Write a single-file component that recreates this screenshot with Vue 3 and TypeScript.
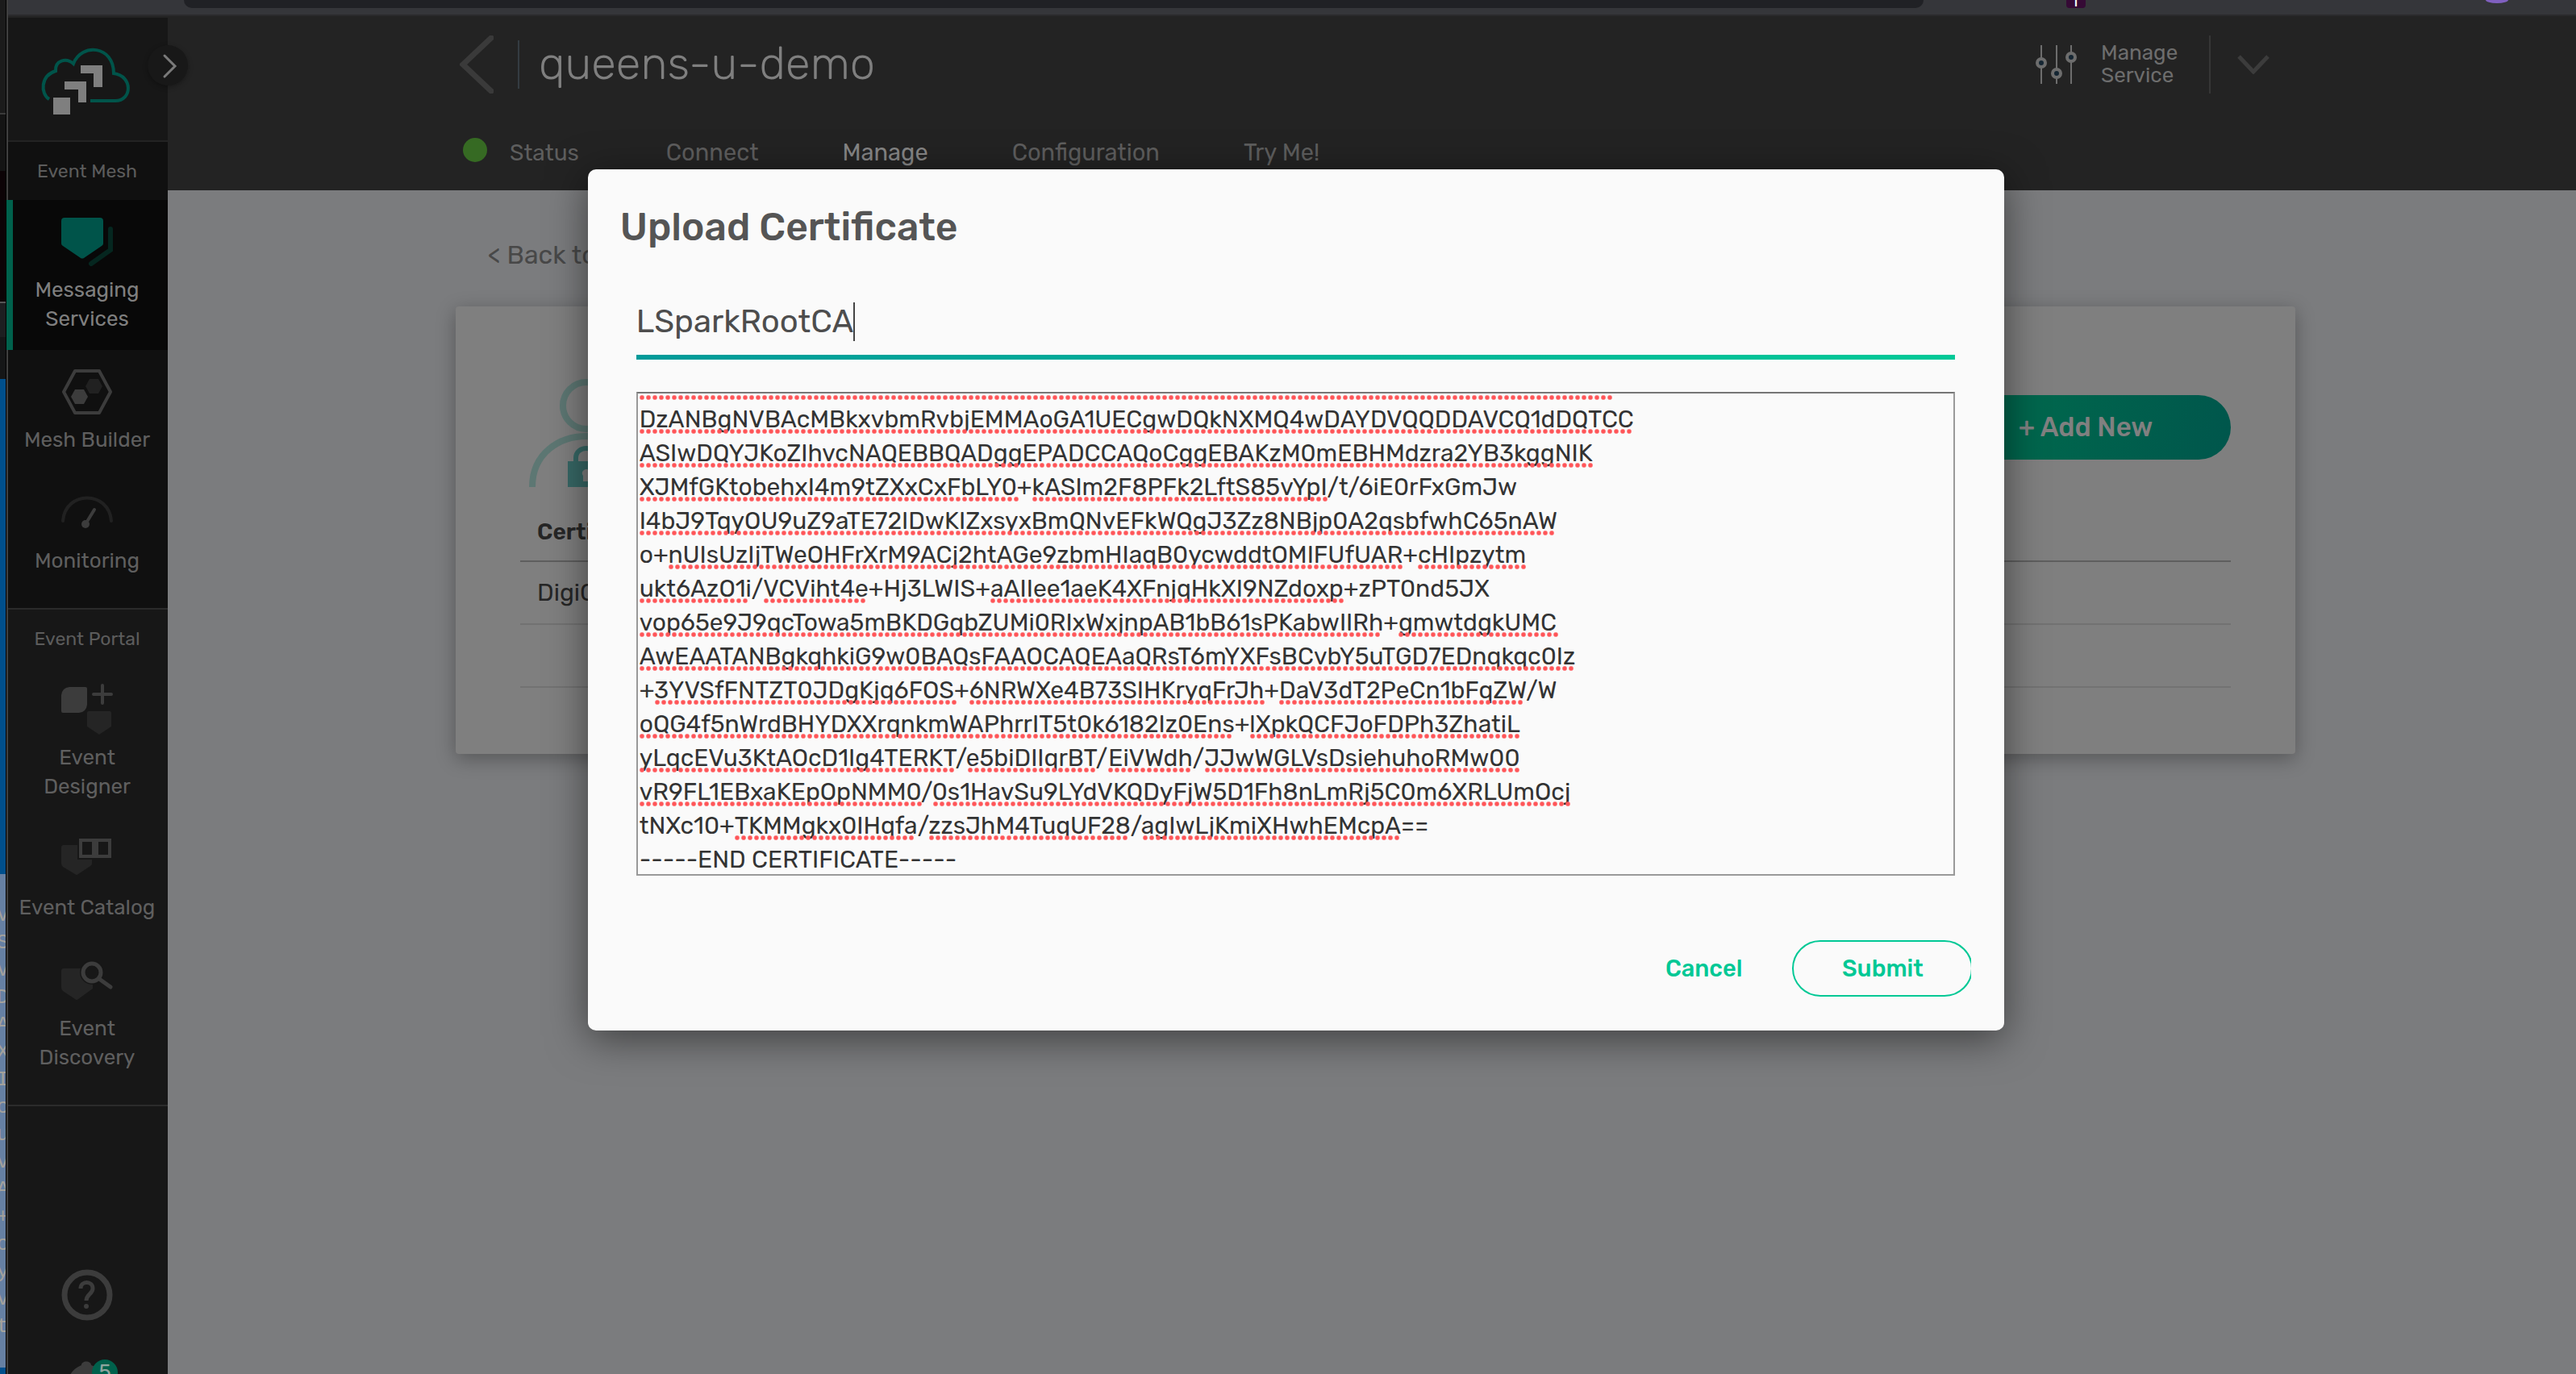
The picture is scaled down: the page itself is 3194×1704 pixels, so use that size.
<script setup lang="ts">
import { onMounted, ref } from 'vue'

interface Mark {
  gap: number
  width: number
}

const name = ref('LSparkRootCA')

const tabs = ['Connect', 'Manage', 'Configuration', 'Try Me!']
const activeTab = 'Manage'

const lines = [
  'DzANBgNVBAcMBkxvbmRvbjEMMAoGA1UECgwDQkNXMQ4wDAYDVQQDDAVCQ1dDQTCC',
  'ASIwDQYJKoZIhvcNAQEBBQADggEPADCCAQoCggEBAKzM0mEBHMdzra2YB3kggNIK',
  'XJMfGKtobehxI4m9tZXxCxFbLY0+kASIm2F8PFk2LftS85vYpI/t/6iE0rFxGmJw',
  'I4bJ9TqyOU9uZ9aTE72IDwKIZxsyxBmQNvEFkWQgJ3Zz8NBjp0A2qsbfwhC65nAW',
  'o+nUIsUzIjTWeOHFrXrM9ACj2htAGe9zbmHIaqB0ycwddtOMIFUfUAR+cHIpzytm',
  'ukt6AzO1i/VCViht4e+Hj3LWIS+aAIIee1aeK4XFnjqHkXI9NZdoxp+zPT0nd5JX',
  'vop65e9J9qcTowa5mBKDGqbZUMi0RIxWxjnpAB1bB61sPKabwIIRh+gmwtdgkUMC',
  'AwEAATANBgkqhkiG9w0BAQsFAAOCAQEAaQRsT6mYXFsBCvbY5uTGD7EDnqkqc0Iz',
  '+3YVSfFNTZT0JDgKjq6FOS+6NRWXe4B73SIHKryqFrJh+DaV3dT2PeCn1bFqZW/W',
  'oQG4f5nWrdBHYDXXrqnkmWAPhrrIT5t0k6182Iz0Ens+lXpkQCFJoFDPh3ZhatiL',
  'yLqcEVu3KtAOcD1Ig4TERKT/e5biDIIqrBT/EiVWdh/JJwWGLVsDsiehuhoRMw00',
  'vR9FL1EBxaKEpOpNMM0/0s1HavSu9LYdVKQDyFjW5D1Fh8nLmRj5C0m6XRLUmOcj',
  'tNXc10+TKMMgkx0IHqfa/zzsJhM4TuqUF28/agIwLjKmiXHwhEMcpA==',
  '-----END CERTIFICATE-----',
]
const certificate = ref(lines.join('\n'))

// Words the spelling checker leaves alone.
const accepted = new Set(['o', 't', 'W', '6iE0rFxGmJw', 'Hj3LWIS', 'zPT0nd5JX', 'tNXc10', 'END', 'CERTIFICATE'])

const area = ref<HTMLTextAreaElement | null>(null)
const marks = ref<Mark[][]>([])

onMounted(() => {
  const ctx = document.createElement('canvas').getContext('2d')
  if (!ctx || !area.value) return
  const style = getComputedStyle(area.value)
  ctx.font = `${style.fontWeight} ${style.fontSize} ${style.fontFamily}`
  marks.value = lines.map((line) => {
    const row: Mark[] = []
    let end = 0
    for (const match of line.matchAll(/[A-Za-z0-9]+/g)) {
      if (accepted.has(match[0])) continue
      const start = ctx.measureText(line.slice(0, match.index)).width
      const size = ctx.measureText(match[0]).width
      const width = Math.round(size / 8) * 8
      row.push({ gap: Math.round(start - end), width })
      end = Math.round(start) + width
    }
    return row
  })
})

const backdropLetters = 'VSVDAXIcuvA+cyvt'.split('')
</script>

<template>
  <div class="screen">
    <div class="backdrop" aria-hidden="true">
      <div class="backdrop-dark"></div>
      <div class="backdrop-blue"></div>
      <div class="backdrop-text">
        <span v-for="(c, i) in backdropLetters" :key="i">{{ c }}</span>
      </div>
      <div class="backdrop-end"></div>
    </div>

    <div class="window">
      <div class="chrome">
        <div class="address"></div>
        <div class="extension">I</div>
        <div class="avatar"></div>
      </div>

      <div class="app">
        <nav class="sidebar">
          <div class="logo">
            <svg width="114" height="90" viewBox="50 56 114 90" fill="none">
              <path d="M61 123C50 116 50 94 69 88C68 75 82 71 91 79C101 53 141 56 141 91C165 94 164 125 143 125H112" stroke="#00544a" stroke-width="4" />
              <path d="M66 121h21v21H66zM80 101h27v26H97v-16H80zM100 81h27v27h-11V91h-16z" fill="#7f7f7f" />
            </svg>
            <button class="expand" aria-label="Expand menu">
              <svg width="50" height="50" viewBox="0 0 50 50" fill="none">
                <path d="M21 13L34 26L21 39" stroke="#7a7a7a" stroke-width="3" stroke-linecap="round" />
              </svg>
            </button>
          </div>

          <div class="group mesh">
            <p class="group-title">Event Mesh</p>
            <a href="#" class="item active">
              <svg width="64" height="64" viewBox="0 0 64 64" fill="none">
                <path d="M4 2H48Q52 2 52 6V34Q52 36 50 37L28 52Q26 53 24 52L2 37Q0 36 0 34V6Q0 2 4 2Z" fill="#00544a" />
                <path d="M61 16V42L37 59" stroke="#05261f" stroke-width="6" stroke-linecap="round" />
              </svg>
              <span>Messaging Services</span>
            </a>
            <a href="#" class="item">
              <svg width="64" height="64" viewBox="0 0 64 64" fill="none">
                <path d="M17 6H47L61 32L47 58H17L3 32Z" stroke="#3c3c3c" stroke-width="4" stroke-linejoin="round" />
                <path d="M17 29H28L33 38L28 47H17L12 38Z" fill="#3c3c3c" />
                <path d="M35 16H46L51 25L46 34H35L30 25Z" fill="#212121" />
              </svg>
              <span>Mesh Builder</span>
            </a>
            <a href="#" class="item">
              <svg width="64" height="64" viewBox="0 0 64 64" fill="none">
                <path d="M2 42C5 4 59 4 62 42" stroke="#212121" stroke-width="4" stroke-linecap="round" />
                <path d="M30 46L41 28" stroke="#3c3c3c" stroke-width="4" stroke-linecap="round" />
                <circle cx="30" cy="46" r="5" fill="#3c3c3c" />
              </svg>
              <span>Monitoring</span>
            </a>
          </div>

          <div class="group portal">
            <p class="group-title">Event Portal</p>
            <a href="#" class="item">
              <svg width="64" height="64" viewBox="0 0 64 64" fill="none">
                <path d="M10 4H30Q32 4 32 6V26Q31 35 22 36H2Q0 36 0 34V14Q1 5 10 4Z" fill="#3c3c3c" />
                <path d="M51 2V24M40 13H62" stroke="#3c3c3c" stroke-width="4" stroke-linecap="round" />
                <path d="M34 34H60Q62 34 62 36V53L47 63L32 53V36Q32 34 34 34Z" fill="#252525" />
              </svg>
              <span>Event Designer</span>
            </a>
            <a href="#" class="item">
              <svg width="64" height="64" viewBox="0 0 64 64" fill="none">
                <path d="M3 14H20V32H38V37Q38 39 36 40L21 50Q19 52 17 50L2 41Q0 39 0 37V17Q0 14 3 14Z" fill="#252525" />
                <path d="M24 8H40V28H24ZM44 8H60V28H44ZM42 9V30" stroke="#3c3c3c" stroke-width="4" />
              </svg>
              <span>Event Catalog</span>
            </a>
            <a href="#" class="item">
              <svg width="64" height="64" viewBox="0 0 64 64" fill="none">
                <path d="M3 17H36L39 37V42L21 55Q19 57 17 55L2 45Q0 43 0 41V20Q0 17 3 17Z" fill="#252525" />
                <circle cx="38" cy="22" r="15" fill="#171717" />
                <circle cx="38" cy="22" r="11" stroke="#3c3c3c" stroke-width="5" />
                <path d="M47 30L61 40" stroke="#3c3c3c" stroke-width="5" stroke-linecap="round" />
              </svg>
              <span>Event Discovery</span>
            </a>
          </div>

          <div class="foot">
            <button class="plain" aria-label="Help">
              <svg width="64" height="64" viewBox="0 0 64 64" fill="none">
                <circle cx="32" cy="32" r="28" stroke="#3c3c3c" stroke-width="7" />
                <path d="M24 24C24 14 39 14 39 24C39 31 31 31 31 39" stroke="#3c3c3c" stroke-width="5" />
                <circle cx="31" cy="46" r="3" fill="#3c3c3c" />
              </svg>
            </button>
            <button class="plain bell" aria-label="Notifications">
              <svg width="64" height="64" viewBox="0 0 64 64">
                <path d="M25 9C25 3 37 3 37 9C50 13 52 23 52 34V50H8V34C8 23 13 14 25 9Z" fill="#3c3c3c" />
              </svg>
              <span class="badge">5</span>
            </button>
          </div>
        </nav>

        <main class="main">
          <header class="header">
            <div class="title-row">
              <button class="plain" aria-label="Back">
                <svg width="42" height="72" viewBox="0 0 42 72" fill="none">
                  <path d="M39 3L4 36L39 69" stroke="#3a3a3a" stroke-width="7" stroke-linecap="round" />
                </svg>
              </button>
              <span class="title-rule"></span>
              <h1>queens-u-demo</h1>
              <button class="plain manage-service">
                <svg width="54" height="48" viewBox="0 0 54 48" fill="none" stroke="#6d6d6d">
                  <path d="M8 0V48M27 0V48M45 0V48" stroke-width="2" />
                  <g fill="#152633" stroke-width="4">
                    <circle cx="8" cy="22" r="5" />
                    <circle cx="27" cy="35" r="5" />
                    <circle cx="45" cy="15" r="5" />
                  </g>
                </svg>
                <span>Manage Service</span>
              </button>
              <span class="menu-rule"></span>
              <button class="plain" aria-label="More actions">
                <svg width="40" height="24" viewBox="0 0 40 24" fill="none">
                  <path d="M2 2L20 21L38 2" stroke="#3c3c3c" stroke-width="5" />
                </svg>
              </button>
            </div>
            <div class="tabs">
              <a href="#" class="status"><i></i>Status</a>
              <a v-for="tab in tabs" :key="tab" href="#" class="tab" :class="{ current: tab === activeTab }">{{ tab }}</a>
            </div>
          </header>

          <section class="content">
            <a href="#" class="back">&lt; Back to</a>
            <div class="card">
              <div class="card-top">
                <svg width="144" height="134" viewBox="0 0 144 134" fill="none">
                  <g stroke="#5d7773" stroke-width="8">
                    <circle cx="71" cy="33" r="29" />
                    <path d="M4 134C4 50 138 50 138 134" />
                  </g>
                  <path d="M58 102V98C58 82 84 82 84 98V102" stroke="#376866" stroke-width="6" />
                  <path d="M48 102H94V134H48Z" fill="#376866" />
                  <path d="M67 127V120A5 5 0 1 1 75 120V127Z" fill="#7f7f7f" />
                </svg>
                <button class="add">+ Add New</button>
              </div>
              <table>
                <thead>
                  <tr><th>Certificate</th></tr>
                </thead>
                <tbody>
                  <tr><td>DigiCert</td></tr>
                  <tr><td></td></tr>
                </tbody>
              </table>
            </div>
          </section>
        </main>
      </div>
    </div>

    <div class="overlay">
      <form class="modal" role="dialog" aria-labelledby="modal-title" @submit.prevent>
        <h2 id="modal-title">Upload Certificate</h2>
        <div class="fields">
          <div class="name-field">
            <input v-model="name" type="text" aria-label="Certificate name" spellcheck="false" />
            <span class="caret"></span>
          </div>
          <div class="cert-field">
            <textarea ref="area" v-model="certificate" aria-label="Certificate content" spellcheck="false"></textarea>
            <div class="marks" aria-hidden="true">
              <div class="mark-row first"><i class="mark long"></i></div>
              <div v-for="(row, r) in marks" :key="r" class="mark-row">
                <i v-for="(m, k) in row" :key="k" class="mark" :style="{ marginLeft: m.gap + 'px', width: m.width + 'px' }"></i>
              </div>
            </div>
          </div>
        </div>
        <div class="actions">
          <button type="button" class="cancel">Cancel</button>
          <button type="submit" class="submit">Submit</button>
        </div>
      </form>
    </div>
  </div>
</template>

<style>
body {
  margin: 0;
  background: #7b7c7e;
}
</style>

<style scoped>
* {
  box-sizing: border-box;
}
.screen {
  position: relative;
  display: flex;
  height: 100vh;
  overflow: hidden;
  font-family: Rubik, Roboto, "Liberation Sans", sans-serif;
  font-size: 26px;
  color: #666;
}
a {
  color: inherit;
  text-decoration: none;
}
button {
  font-family: inherit;
  cursor: pointer;
}
svg {
  display: block;
  flex: none;
}
h1,
h2,
p {
  margin: 0;
}
.plain {
  padding: 0;
  border: 0;
  background: none;
  color: inherit;
}

/* Desktop strip left of the browser window */
.backdrop {
  display: flex;
  flex-direction: column;
  flex: none;
  width: 8px;
  overflow: hidden;
  border-right: 1px solid #000;
}
.backdrop-dark {
  height: 470px;
  background: linear-gradient(#1b1b1b 140px, #3a3a3a 140px, #3a3a3a 142px, #141414 142px, #141414 212px, #0c0306 212px, #0c0306 374px, #555 374px, #555 376px, #1d1f21 376px, #1d1f21 418px, #151617 418px);
}
.backdrop-blue {
  height: 614px;
  background: #004f8c;
}
.backdrop-text {
  display: flex;
  flex-direction: column;
  align-items: center;
  height: 612px;
  padding-top: 34px;
  background: #6680a3;
  color: #a3a19c;
  font-family: "Liberation Mono", monospace;
  line-height: 34px;
}
.backdrop-end {
  flex: 1;
  background: #004f8c;
}

.window {
  display: flex;
  flex-direction: column;
  flex: 1;
  min-width: 0;
  border-left: 2px solid #3f3f3f;
}
.chrome {
  display: flex;
  flex: none;
  height: 20px;
  padding: 0 84px 0 218px;
  background: #35363a;
  border-bottom: 2px solid #2a2a2c;
  overflow: hidden;
}
.address {
  flex: 1;
  height: 10px;
  margin-right: 177px;
  border-radius: 0 0 30px 30px;
  background: #202125;
}
.extension {
  width: 24px;
  height: 10px;
  border-radius: 0 0 4px 4px;
  background: #350a35;
  color: #fff;
  font-size: 20px;
  line-height: 2px;
  text-align: center;
}
.avatar {
  width: 28px;
  height: 4px;
  margin-left: 496px;
  border-radius: 0 0 50% 50% / 0 0 100% 100%;
  background: #8060c0;
}
.app {
  display: flex;
  flex: 1;
  min-height: 0;
}

.sidebar {
  flex: none;
  width: 198px;
  background: #171717;
  border-top: 2px solid #232323;
}
.logo {
  position: relative;
  display: flex;
  justify-content: center;
  height: 154px;
  padding: 34px 4px 0 0;
  border-bottom: 2px solid #232323;
}
.expand {
  position: absolute;
  z-index: 1;
  top: 34px;
  right: -25px;
  width: 50px;
  height: 50px;
  padding: 0;
  border: 0;
  border-radius: 50%;
  background: #181818;
  box-shadow: 0 2px 6px rgba(0, 0, 0, 0.3);
}
.group {
  padding-bottom: 20px;
  border-bottom: 2px solid #2b2b2b;
}
.mesh {
  background: #101010;
}
.group-title {
  padding-right: 2px;
  font-size: 23px;
  line-height: 72px;
  text-align: center;
  color: #5c5c5c;
}
.item {
  display: flex;
  flex-direction: column;
  align-items: center;
  gap: 10px;
  padding: 20px 2px 20px 0;
  font-size: 26px;
  line-height: 36px;
  text-align: center;
  color: #5f5f5f;
}
.item.active {
  margin-left: -2px;
  padding-right: 8px;
  border-left: 8px solid #00614c;
  background: #080808;
  color: #7f7f7f;
}
.item span {
  max-width: 172px;
}
.item.active span {
  width: 150px;
}
.foot {
  display: flex;
  flex-direction: column;
  align-items: center;
  gap: 46px;
  height: 334px;
  padding: 202px 2px 0 0;
  overflow: hidden;
}
.bell {
  position: relative;
}
.badge {
  position: absolute;
  top: 2px;
  right: -6px;
  width: 32px;
  height: 32px;
  border-radius: 50%;
  background: #00614c;
  color: #8fa59f;
  font-size: 26px;
  line-height: 32px;
}

.main {
  display: flex;
  flex-direction: column;
  flex: 1;
  min-width: 0;
  background: #7b7c7e;
}
.header {
  flex: none;
  height: 216px;
  padding: 22px 380px 0 362px;
  background: #232323;
}
.title-row {
  display: flex;
  align-items: center;
  height: 76px;
}
.title-rule {
  width: 2px;
  height: 60px;
  margin: 0 24px 0 30px;
  background: #343c42;
}
h1 {
  margin-right: auto;
  padding-bottom: 2px;
  font-size: 56px;
  font-weight: 300;
  line-height: 72px;
  color: #7f7f7f;
}
.manage-service {
  display: flex;
  align-items: center;
  gap: 28px;
  font-size: 26px;
  line-height: 28px;
  text-align: left;
  color: #6d6d6d;
}
.manage-service span {
  width: 100px;
}
.menu-rule {
  width: 2px;
  height: 72px;
  margin: 0 33px 0 34px;
  background: #363636;
}
.tabs {
  display: flex;
  gap: 104px;
  padding: 53px 0 0 4px;
  font-size: 29px;
  line-height: 36px;
  color: #5e5e5e;
}
.tab.current {
  color: #868686;
}
.status {
  display: flex;
  align-items: center;
  gap: 28px;
  margin-right: 4px;
  font-size: 28px;
}
.status i {
  width: 30px;
  height: 30px;
  margin-bottom: 8px;
  border-radius: 50%;
  background: #366a23;
}

.content {
  flex: 1;
  padding: 58px 348px 0 357px;
}
.back {
  display: block;
  padding-left: 40px;
  font-size: 32px;
  line-height: 44px;
  color: #484848;
}
.card {
  margin-top: 42px;
  padding: 90px 80px 82px;
  border-radius: 4px;
  background: #7f7f7f;
  box-shadow: 0 6px 24px rgba(0, 0, 0, 0.3);
}
.card-top {
  display: flex;
  justify-content: space-between;
  height: 154px;
  padding-left: 11px;
}
.add {
  width: 340px;
  height: 80px;
  margin-top: 20px;
  padding: 0 20px 2px 0;
  border: 0;
  border-radius: 40px;
  background: linear-gradient(100deg, #00664d 30%, #00564c);
  color: #808080;
  font-size: 33px;
  font-weight: 500;
}
table {
  width: 100%;
  border-collapse: collapse;
  line-height: 36px;
  color: #262626;
}
th,
td {
  height: 78px;
  padding: 0 21px;
  font-size: 30px;
  text-align: left;
  border-bottom: 2px solid #727272;
}
th {
  height: 72px;
  font-size: 28px;
  font-weight: 600;
  border-bottom-color: #5e5e5e;
}

.overlay {
  position: absolute;
  inset: 0;
  display: flex;
  justify-content: center;
  align-items: flex-start;
  padding: 210px 0 0 20px;
}
.modal {
  width: 55vw;
  padding: 38px 41px 42px 40px;
  border-radius: 10px;
  background: #fafafa;
  box-shadow: 0 10px 50px rgba(0, 0, 0, 0.5);
}
h2 {
  font-size: 48px;
  font-weight: 500;
  line-height: 68px;
  color: #555;
}
.fields {
  padding: 44px 20px 0;
}
.name-field {
  display: flex;
  align-items: center;
  height: 86px;
  padding-bottom: 2px;
  border-bottom: 6px solid;
  border-image: linear-gradient(90deg, #009a99, #00c997) 1;
}
.name-field input {
  field-sizing: content;
  padding: 0;
  border: 0;
  outline: 0;
  background: none;
  font-family: inherit;
  font-size: 40px;
  line-height: 48px;
  color: #4d4d4d;
}
.caret {
  width: 2px;
  height: 48px;
  background: #444;
}
.cert-field {
  position: relative;
  margin-top: 40px;
}
textarea {
  display: block;
  width: 100%;
  height: 600px;
  padding: 11px 2px 0;
  border: 2px solid #999;
  border-top-color: #767676;
  border-radius: 0;
  outline: 0;
  background: none;
  font-family: inherit;
  font-size: 30px;
  line-height: 42px;
  color: #333;
  white-space: pre;
  overflow: hidden;
  resize: none;
}
.marks {
  position: absolute;
  inset: 2px;
  padding-left: 2px;
  overflow: hidden;
  pointer-events: none;
}
.mark-row {
  display: flex;
  align-items: flex-end;
  height: 42px;
  padding-bottom: 3px;
}
.mark-row.first {
  height: 11px;
}
.mark {
  flex: none;
  height: 6px;
  background: radial-gradient(circle at 3px 3px, #ff5558 2px, rgba(255, 85, 88, 0.4) 3px, transparent 3px) 0 0 / 8px 6px repeat-x;
}
.mark.long {
  width: 1208px;
}
.actions {
  display: flex;
  justify-content: flex-end;
  align-items: center;
  gap: 62px;
  padding-top: 80px;
  overflow: hidden;
}
.actions button {
  font-size: 29px;
  font-weight: 500;
  color: #00c895;
}
.cancel {
  padding: 0;
  border: 0;
  background: none;
}
.submit {
  width: 224px;
  height: 70px;
  margin-right: -2px;
  border: 2px solid #00c895;
  border-radius: 35px;
  background: none;
}
</style>
